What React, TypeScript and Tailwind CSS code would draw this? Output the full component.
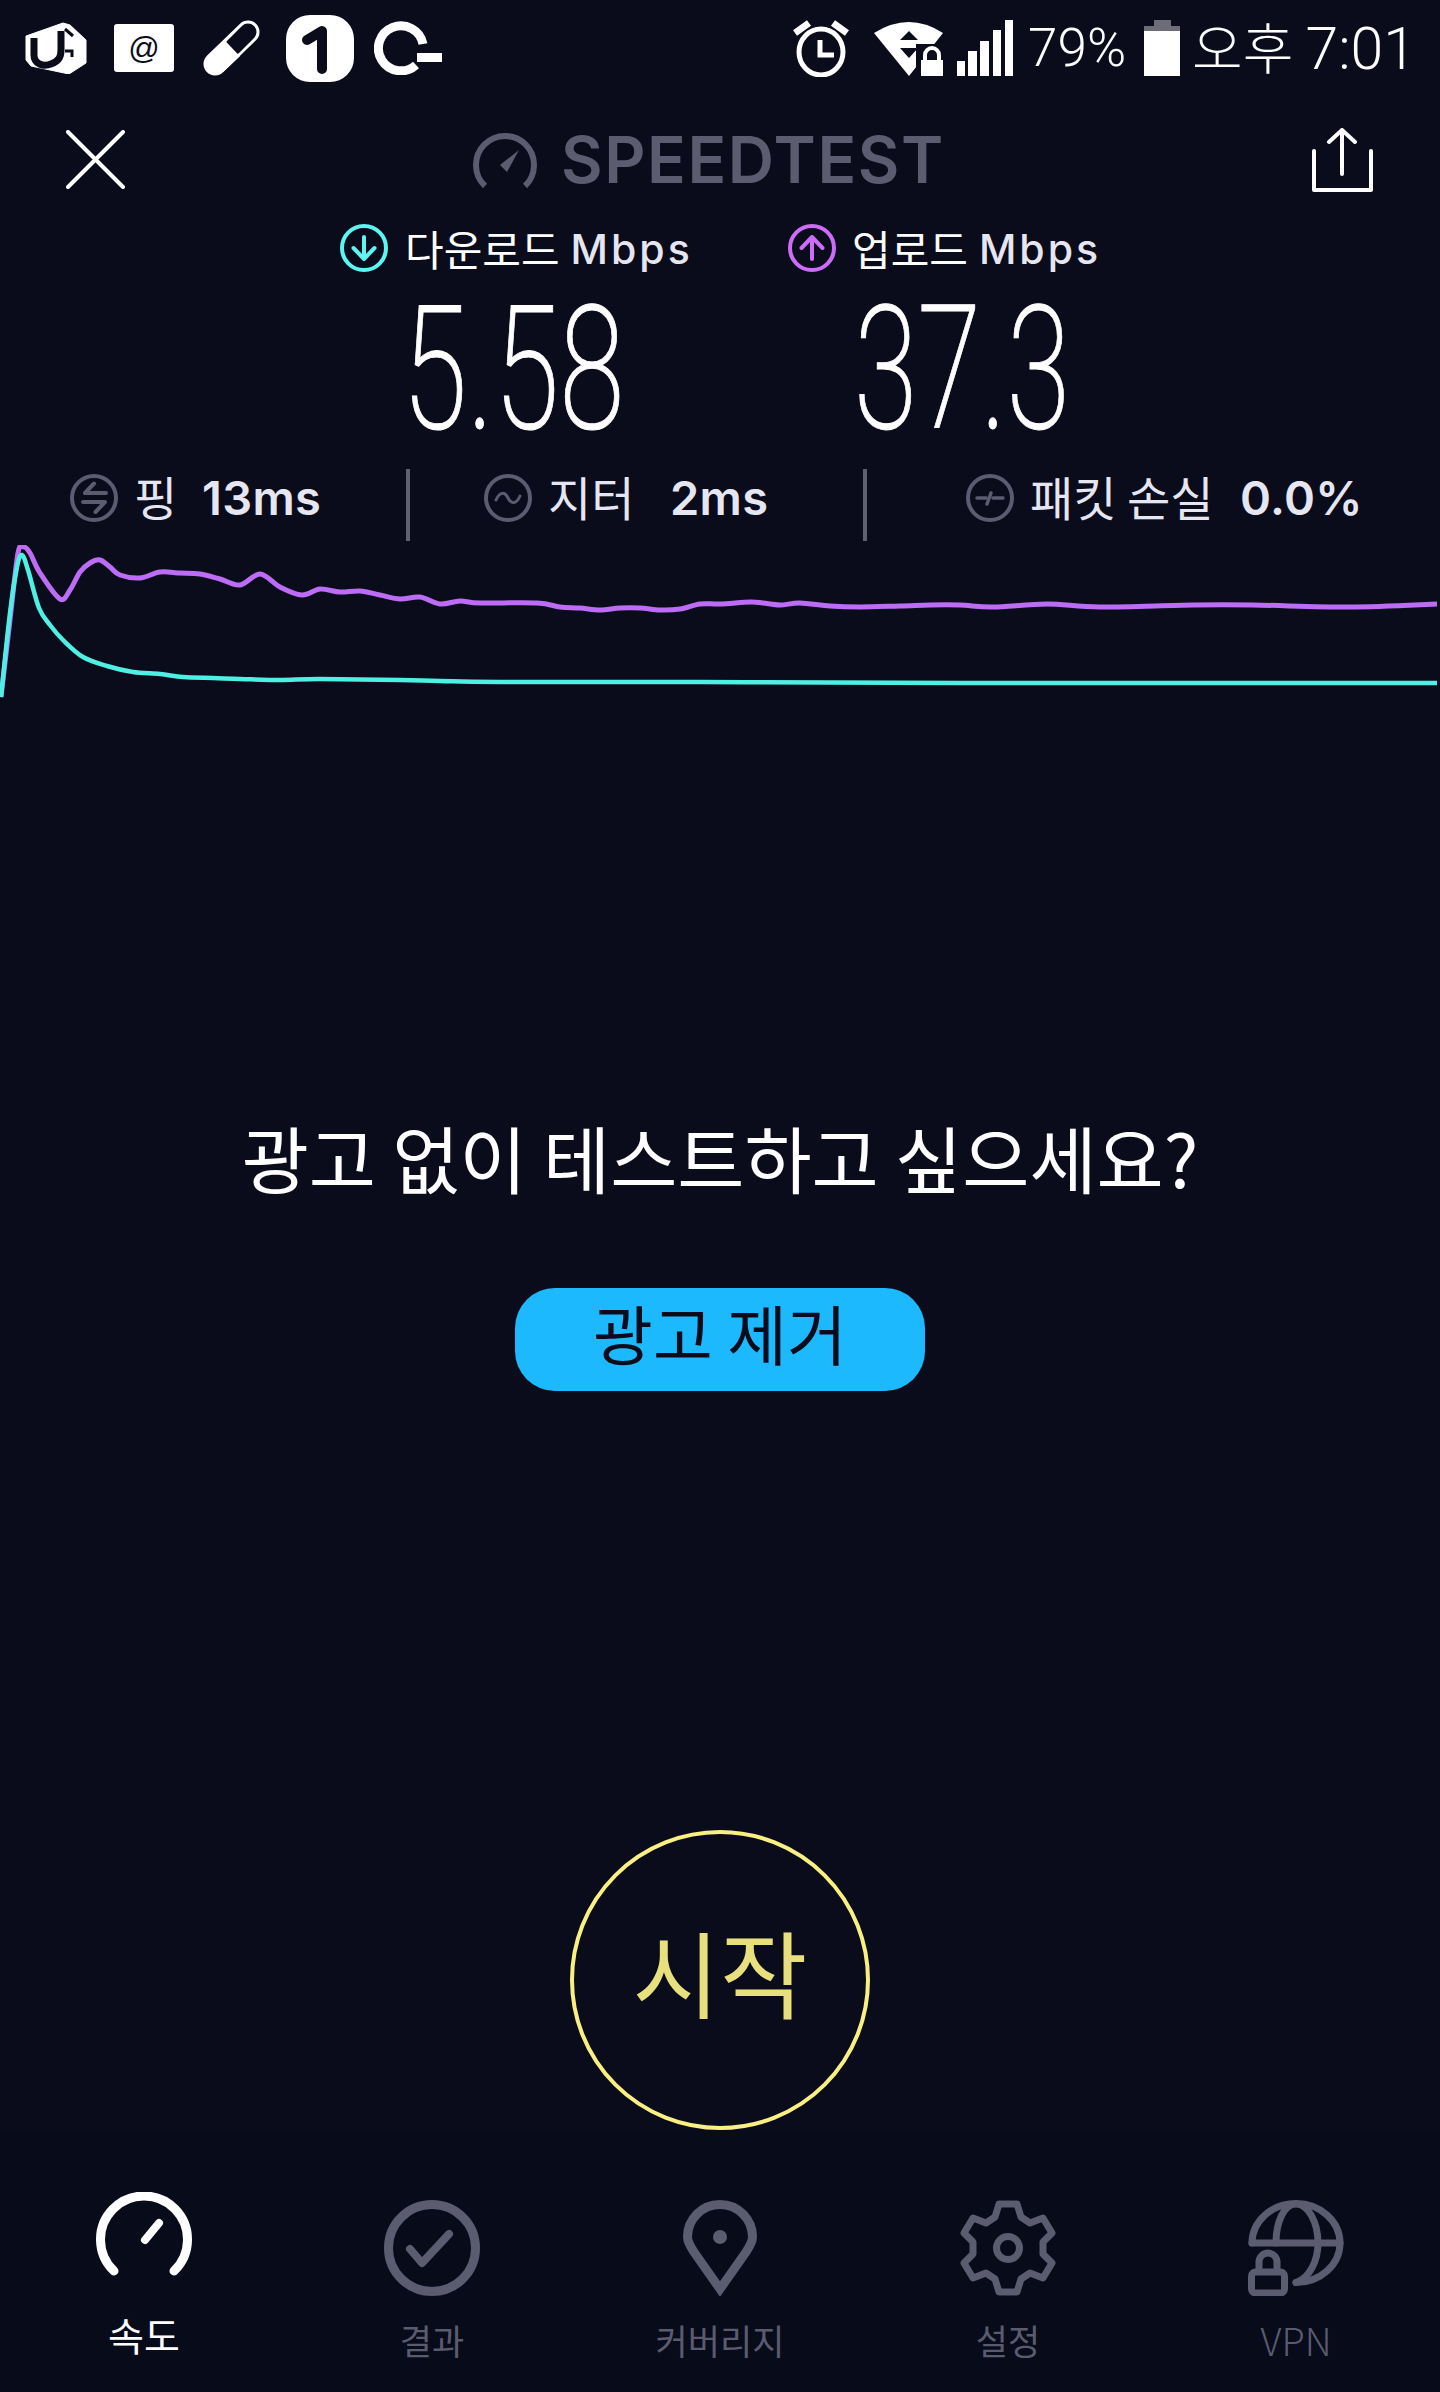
import React from "react";

const GRAY = "#5b5c70";
const DARK = "#0a0c1b";

type P = [number, number];

function smooth(pts: P[]): string {
  let d = `M${pts[0][0]} ${pts[0][1]}`;
  for (let i = 0; i < pts.length - 1; i++) {
    const p0 = pts[Math.max(0, i - 1)];
    const p1 = pts[i];
    const p2 = pts[i + 1];
    const p3 = pts[Math.min(pts.length - 1, i + 2)];
    const c1x = p1[0] + (p2[0] - p0[0]) / 6;
    const c1y = p1[1] + (p2[1] - p0[1]) / 6;
    const c2x = p2[0] - (p3[0] - p1[0]) / 6;
    const c2y = p2[1] - (p3[1] - p1[1]) / 6;
    d += ` C${c1x.toFixed(1)} ${c1y.toFixed(1)} ${c2x.toFixed(1)} ${c2y.toFixed(1)} ${p2[0]} ${p2[1]}`;
  }
  return d;
}

const purple: P[] = [
  [1, 697], [10, 620], [18, 553], [24, 547], [30, 553], [40, 573], [60, 599], [70, 590], [80, 572], [90, 563],
  [100, 560], [110, 567], [120, 575], [140, 578], [160, 572], [180, 573], [200, 574], [220, 579], [240, 585],
  [260, 574], [280, 587], [302, 595], [320, 589], [340, 592], [360, 591], [380, 595], [400, 599], [420, 597],
  [440, 604], [460, 601], [480, 603], [537, 603], [560, 607], [580, 608], [600, 610], [620, 608], [640, 608],
  [660, 610], [680, 609], [700, 604], [720, 604], [750, 602], [763, 603], [780, 605], [800, 603], [830, 606],
  [860, 607], [900, 606], [930, 605], [960, 605], [993, 607], [1047, 604], [1100, 607], [1193, 605], [1253, 605],
  [1350, 607], [1437, 604],
];

const cyan: P[] = [
  [1, 697], [10, 613], [17, 567], [22, 555], [28, 570], [39, 608], [50, 625], [63, 640], [83, 657], [107, 666],
  [133, 672], [160, 674], [183, 677], [213, 678], [240, 679], [280, 680], [320, 679], [400, 680], [440, 681],
  [500, 682], [700, 682], [960, 683], [1437, 683],
];

function UPlus() {
  return (
    <svg width="62" height="52" viewBox="0 0 62 52" className="block">
      <path d="M1 14 L38 1 L45 3 L61 18 L61 41 L44 52 L6 44 L1 38 Z" fill="#fff" stroke="#fff" strokeLinejoin="round" />
      <path d="M9 16 V33 C9 42 18 45 26 42 C34 39 36 35 36 28 V9" fill="none" stroke={DARK} strokeWidth="7" />
      <path d="M40 7 L48 14 M40 29 H47 V35" fill="none" stroke={DARK} strokeWidth="3" />
    </svg>
  );
}

function Pill() {
  return (
    <svg width="57" height="56" viewBox="0 0 57 56" className="block">
      <line x1="12" y1="44" x2="45" y2="12" stroke="#fff" strokeWidth="23" strokeLinecap="round" />
      <line x1="30" y1="27" x2="45" y2="12" stroke={DARK} strokeWidth="17" strokeLinecap="round" />
      <line x1="12" y1="44" x2="29" y2="28" stroke="#fff" strokeWidth="23" />
    </svg>
  );
}

function One() {
  return (
    <div className="w-[68px] h-[67px] bg-white rounded-[24px] flex items-center justify-center">
      <svg width="68" height="67" viewBox="0 0 68 67" className="block">
        <path d="M21 25 L36 16 V54" fill="none" stroke={DARK} strokeWidth="10" strokeLinecap="round" strokeLinejoin="round" />
      </svg>
    </div>
  );
}

function CKey() {
  return (
    <svg width="68" height="54" viewBox="0 0 68 54" className="block">
      <path d="M49 23 A22.5 22.5 0 1 0 42 44" fill="none" stroke="#fff" strokeWidth="9" />
      <rect x="43" y="32" width="25" height="9" fill="#fff" />
    </svg>
  );
}

function Alarm() {
  return (
    <svg width="56" height="57" viewBox="0 0 56 57" className="block">
      <ellipse cx="28" cy="32" rx="22" ry="23" fill="none" stroke="#fff" strokeWidth="5" />
      <path d="M2 13 L16 3 M54 13 L40 3" stroke="#fff" strokeWidth="7" />
      <path d="M27 20 V35 H41" fill="none" stroke="#fff" strokeWidth="5" />
    </svg>
  );
}

function Wifi() {
  return (
    <svg width="69" height="56" viewBox="0 0 69 56" className="block">
      <path d="M0 13 Q35 -9 69 13 L35 56 Z" fill="#fff" />
      <path d="M35 11 L26 20 H44 Z M26 28 H44 L35 38 Z" fill={DARK} />
      <rect x="42" y="24" width="27" height="32" fill={DARK} />
      <rect x="47" y="40" width="22" height="16" fill="#fff" />
      <path d="M51 41 V35 a7 7 0 0 1 14 0 V41" fill="none" stroke="#fff" strokeWidth="4" />
    </svg>
  );
}

function Signal() {
  return (
    <svg width="56" height="56" viewBox="0 0 56 56" className="block" fill="#fff">
      <rect x="0" y="41" width="8" height="15" />
      <rect x="11" y="31" width="9" height="25" />
      <rect x="23" y="21" width="9" height="35" />
      <rect x="36" y="10" width="8" height="46" />
      <rect x="48" y="0" width="8" height="56" />
    </svg>
  );
}

function Battery() {
  return (
    <svg width="36" height="56" viewBox="0 0 36 56" className="block">
      <path d="M10 0 H27 V6 H36 V11 H0 V6 H10 Z" fill="#6d6d78" />
      <rect x="0" y="11" width="36" height="45" fill="#fff" />
    </svg>
  );
}

function Close() {
  return (
    <svg width="59" height="59" viewBox="0 0 59 59" className="block">
      <path d="M2 2 L57 57 M57 2 L2 57" stroke="#fff" strokeWidth="4" strokeLinecap="round" />
    </svg>
  );
}

function Share() {
  return (
    <svg width="61" height="64" viewBox="0 0 61 64" className="block">
      <path d="M2 23 V62 H59 V23" fill="none" stroke="#fff" strokeWidth="4" strokeLinecap="round" strokeLinejoin="round" />
      <path d="M30 46 V2 M17 14 L30 2 L43 14" fill="none" stroke="#fff" strokeWidth="4" strokeLinecap="round" strokeLinejoin="round" />
    </svg>
  );
}

function LogoGauge() {
  return (
    <svg width="64" height="55" viewBox="0 0 64 55" className="block">
      <path d="M12 53 A29 29 0 1 1 52 53" fill="none" stroke={GRAY} strokeWidth="6" />
      <path d="M27 32 L46 17 L34 39 Z" fill={GRAY} />
    </svg>
  );
}

function Ring({ color, children }: { color: string; children: React.ReactNode }) {
  return (
    <svg width="48" height="48" viewBox="0 0 48 48" className="block shrink-0">
      <ellipse cx="24" cy="24" rx="22" ry="22" fill="none" stroke={color} strokeWidth="4" />
      <g fill="none" stroke={color} strokeLinecap="round" strokeLinejoin="round">
        {children}
      </g>
    </svg>
  );
}

function Stat({ label, value, icon, labelW, gap }: { label: string; value: string; icon: React.ReactNode; labelW: string; gap: string }) {
  return (
    <div className="flex items-center -translate-y-[7px]">
      {icon}
      <span className={`${labelW} ml-[16px] -translate-y-[3px] text-[47px] leading-none text-[#e6e6f3] whitespace-nowrap`}>{label}</span>
      <span className={`${gap} -translate-y-[1px] font-['Inter',sans-serif] font-semibold text-[47px] leading-none text-[#e6e6f3] whitespace-nowrap tracking-[0.3px]`}>{value}</span>
    </div>
  );
}

function NavGauge() {
  return (
    <svg width="96" height="84" viewBox="0 0 96 84" className="block">
      <path d="M18 79 A43.5 43.5 0 1 1 78 79" fill="none" stroke="#fff" strokeWidth="9" strokeLinecap="round" />
      <path d="M49 48 L63 31" fill="none" stroke="#fff" strokeWidth="8" strokeLinecap="round" />
    </svg>
  );
}

function NavCheck() {
  return (
    <svg width="96" height="96" viewBox="0 0 96 96" className="block">
      <circle cx="48" cy="48" r="43.5" fill="none" stroke={GRAY} strokeWidth="9" />
      <path d="M26 49 L38 63 L65 34" fill="none" stroke={GRAY} strokeWidth="8" strokeLinecap="round" strokeLinejoin="round" />
    </svg>
  );
}

function NavPin() {
  return (
    <svg width="74" height="96" viewBox="0 0 74 96" className="block">
      <path d="M37 89 L11 52 C7 46 4.5 42 4.5 37 A32.5 32.5 0 0 1 69.5 37 C69.5 42 67 46 63 52 Z" fill="none" stroke={GRAY} strokeWidth="9" strokeLinejoin="miter" />
      <circle cx="37" cy="37" r="7" fill={GRAY} />
    </svg>
  );
}

function NavGear() {
  return (
    <svg width="96" height="96" viewBox="0 0 96 96" className="block">
      <path d="M39 4 H57 L61 17 L70 23 L83 18 L92 33 L83 42 V54 L92 63 L83 78 L70 73 L61 79 L57 92 H39 L35 79 L26 73 L13 78 L4 63 L13 54 V42 L4 33 L13 18 L26 23 L35 17 Z" fill="none" stroke={GRAY} strokeWidth="7" strokeLinejoin="round" />
      <circle cx="48" cy="48" r="11.5" fill="none" stroke={GRAY} strokeWidth="7" />
    </svg>
  );
}

function NavVpn() {
  return (
    <svg width="96" height="96" viewBox="0 0 96 96" className="block">
      <g fill="none" stroke={GRAY} strokeWidth="7" strokeLinecap="round" strokeLinejoin="round">
        <path d="M4 43 A44 39.5 0 1 1 48 82.5" />
        <path d="M4 43 H92" />
        <path d="M28 43 C28 22 36 4 48 4 C60 4 70 22 70 43 C70 60 62 78 48 82.5" />
        <rect x="3.5" y="72" width="33" height="21" rx="4" />
        <path d="M11 70 V62 a9 9 0 0 1 18 0 V70" />
      </g>
    </svg>
  );
}

const navItems = [
  { label: "속도", icon: <NavGauge />, cls: "text-white text-[39px] mt-[38px]", top: "pt-[62px]", h: "h-[84px]" },
  { label: "결과", icon: <NavCheck />, cls: "text-[#5a5b6f] text-[35px] mt-[24px]", top: "pt-[70px]", h: "h-[96px]" },
  { label: "커버리지", icon: <NavPin />, cls: "text-[#5a5b6f] text-[35px] mt-[24px]", top: "pt-[70px]", h: "h-[96px]" },
  { label: "설정", icon: <NavGear />, cls: "text-[#5a5b6f] text-[35px] mt-[24px]", top: "pt-[70px]", h: "h-[96px]" },
  { label: "VPN", icon: <NavVpn />, cls: "text-[#5a5b6f] text-[38px] font-light mt-[24px]", top: "pt-[70px]", h: "h-[96px]" },
];

export default function App() {
  return (
    <div className="w-[1440px] h-[2392px] overflow-hidden bg-[#0a0c1b] flex flex-col font-['Noto_Sans_CJK_KR',sans-serif] text-white">
      {/* status bar */}
      <div className="h-[96px] shrink-0 flex items-center pl-[25px] pr-[24px]">
        <UPlus />
        <div className="ml-[27px] w-[60px] h-[48px] bg-white rounded-[3px] flex items-center justify-center text-[#0a0c1b] text-[31px] leading-none font-['Liberation_Sans',sans-serif]">@</div>
        <div className="ml-[29px]"><Pill /></div>
        <div className="ml-[26px]"><One /></div>
        <div className="ml-[20px]"><CKey /></div>
        <div className="ml-auto"><Alarm /></div>
        <div className="ml-[25px]"><Wifi /></div>
        <div className="ml-[14px]"><Signal /></div>
        <span className="ml-[15px] font-['Roboto',sans-serif] font-light text-[53px] leading-none">79%</span>
        <div className="ml-[18px]"><Battery /></div>
        <span className="ml-[12px] font-light text-[55px] leading-none whitespace-nowrap">오후 <span className="font-['Roboto',sans-serif] font-light text-[59px]">7:01</span></span>
      </div>

      {/* header */}
      <div className="h-[114px] shrink-0 flex items-start pt-[32px]">
        <div className="ml-[66px] mt-[2px]"><Close /></div>
        <div className="ml-[348px] flex items-center">
          <LogoGauge />
          <span className="ml-[24px] font-['Inter',sans-serif] font-semibold text-[64px] leading-none text-[#5b5c70] tracking-[1.6px]">SPEEDTEST</span>
        </div>
        <div className="ml-auto mr-[67px]"><Share /></div>
      </div>

      {/* speed labels */}
      <div className="h-[75px] shrink-0 flex items-start pt-[14px] pl-[340px]">
        <div className="w-[448px] flex items-center">
          <Ring color="#5cf5ef">
            <path d="M24 13 V35 M13.5 24 L24 35 L34.5 24" strokeWidth="4" />
          </Ring>
          <span className="ml-[17px] text-[42px] leading-none">다운로드</span>
          <span className="ml-[11px] pt-[2px] font-['Inter',sans-serif] font-medium text-[41px] leading-none text-[#e6e6f3] tracking-[3px]">Mbps</span>
        </div>
        <div className="flex items-center">
          <Ring color="#cc6cf7">
            <path d="M24 35 V13 M13.5 24 L24 13 L34.5 24" strokeWidth="4" />
          </Ring>
          <span className="ml-[16px] text-[42px] leading-none">업로드</span>
          <span className="ml-[11px] pt-[2px] font-['Inter',sans-serif] font-medium text-[41px] leading-none text-[#e6e6f3] tracking-[3px]">Mbps</span>
        </div>
      </div>

      {/* big numbers */}
      <div className="h-[180px] shrink-0 relative flex items-center pl-[402px] pb-[12px]">
        <span className="w-[452px] shrink-0 font-['Roboto',sans-serif] font-extralight text-[172px] leading-none origin-left scale-x-[0.69] [-webkit-text-stroke:1px_white]">5.58</span>
        <span className="shrink-0 font-['Roboto',sans-serif] font-extralight text-[172px] leading-none origin-left scale-x-[0.67] [-webkit-text-stroke:1px_white]">37.3</span>
      </div>

      {/* stats */}
      <div className="h-[80px] shrink-0 flex items-center">
        <div className="ml-[70px] w-[336px]">
          <Stat
            label="핑"
            value="13ms"
            labelW="w-[44px]"
            gap="ml-[24px]"
            icon={
              <Ring color={GRAY}>
                <path d="M24 9.5 L15 19 H36 M13 28 H35 L25.5 38" strokeWidth="4" />
              </Ring>
            }
          />
        </div>
        <div className="w-[4px] h-[72px] bg-[#5f6072]" />
        <div className="ml-[74px] w-[379px]">
          <Stat
            label="지터"
            value="2ms"
            labelW="w-[88px]"
            gap="ml-[34px]"
            icon={
              <Ring color={GRAY}>
                <path d="M12 26 C16 17 21 18 24 24 C27 30 32 31 36 22" strokeWidth="3" />
              </Ring>
            }
          />
        </div>
        <div className="w-[4px] h-[72px] bg-[#5f6072]" />
        <div className="ml-[99px]">
          <Stat
            label="패킷 손실"
            value="0.0%"
            labelW="w-[189px]"
            gap="ml-[21px]"
            icon={
              <Ring color={GRAY}>
                <path d="M11 24 H20 M27 24 H37 M25 19 L21 30" strokeWidth="3.5" />
              </Ring>
            }
          />
        </div>
      </div>

      {/* chart */}
      <svg width="1440" height="160" viewBox="0 545 1440 160" className="block shrink-0">
        <path d={smooth(purple)} fill="none" stroke="#bd6cf5" strokeWidth="5" strokeLinejoin="round" />
        <path d={smooth(cyan)} fill="none" stroke="#4ff0e4" strokeWidth="4.5" strokeLinejoin="round" />
      </svg>

      {/* upsell */}
      <div className="mt-[401px] h-[100px] shrink-0 flex items-center justify-center text-[73px] leading-none whitespace-nowrap">
        광고 없이 테스트하고 싶으세요?
      </div>
      <div className="mt-[82px] shrink-0 self-center w-[410px] h-[103px] pb-[14px] rounded-[40px] bg-[#1cb9ff] flex items-center justify-center text-[#0a0c1b] text-[65px] leading-none">
        광고 제거
      </div>

      {/* start */}
      <div className="mt-[439px] shrink-0 self-center w-[300px] h-[300px] pb-[20px] rounded-full border-[4px] border-[#f9f083] flex items-center justify-center text-[#e8df7d] text-[95px] leading-none">
        시작
      </div>

      {/* nav */}
      <div className="grid grid-cols-5 shrink-0 h-[262px] bg-[#080b1a]">
        {navItems.map((it) => (
          <div key={it.label} className={`flex flex-col items-center ${it.top}`}>
            <div className={`${it.h} flex items-start`}>{it.icon}</div>
            <span className={`${it.cls} leading-[40px] whitespace-nowrap`}>{it.label}</span>
          </div>
        ))}
      </div>
    </div>
  );
}
